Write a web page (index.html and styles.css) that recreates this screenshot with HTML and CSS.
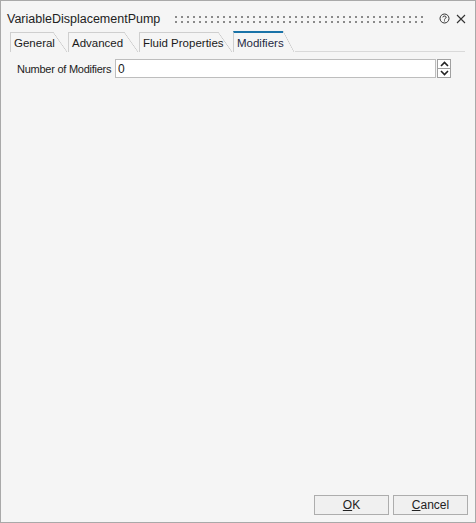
FILE: index.html
```html
<!DOCTYPE html>
<html lang="en">
<head>
  <meta charset="UTF-8">
  <title>VariableDisplacementPump</title>
  <link rel="stylesheet" href="styles.css">
</head>
<body>
  <div class="window">
    <div class="titlebar">
      <span class="title">VariableDisplacementPump</span>
      <span class="grip"></span>
      <svg class="help" width="11" height="11" viewBox="0 0 11 11">
        <circle cx="5.5" cy="5.5" r="4.5" fill="none" stroke="#333" stroke-width="1"/>
        <path d="M3.8 4.3 C3.8 2.6 7.2 2.6 7.2 4.3 C7.2 5.4 5.5 5.3 5.5 6.6" fill="none" stroke="#333" stroke-width="1"/>
        <rect x="5" y="7.4" width="1" height="1" fill="#333"/>
      </svg>
      <svg class="close" width="10" height="10" viewBox="0 0 10 10">
        <path d="M1 1 L9 9 M9 1 L1 9" stroke="#333" stroke-width="1.1"/>
      </svg>
    </div>

    <div class="tabs">
      <div class="tab"><span class="tab-label w-general">General</span><span class="tab-slant"></span></div>
      <div class="tab"><span class="tab-label w-advanced">Advanced</span><span class="tab-slant"></span></div>
      <div class="tab"><span class="tab-label w-fluid">Fluid Properties</span><span class="tab-slant"></span></div>
      <div class="tab active"><span class="tab-label w-modifiers">Modifiers</span><span class="tab-slant"></span></div>
      <div class="tab-rest"></div>
    </div>

    <div class="content">
      <div class="field">
        <label class="field-label">Number of Modifiers</label>
        <input class="field-input" type="text" value="0">
        <div class="spinner">
          <span class="spin-btn">
            <svg width="9" height="6" viewBox="0 0 9 6"><path d="M1 5 L4.5 1.5 L8 5" fill="none" stroke="#222" stroke-width="1.6"/></svg>
          </span>
          <span class="spin-btn">
            <svg width="9" height="6" viewBox="0 0 9 6"><path d="M1 1 L4.5 4.5 L8 1" fill="none" stroke="#222" stroke-width="1.6"/></svg>
          </span>
        </div>
      </div>
    </div>

    <div class="footer">
      <button class="button"><u>O</u>K</button>
      <button class="button"><u>C</u>ancel</button>
    </div>
  </div>
</body>
</html>
```

FILE: styles.css
```css
body {
  margin: 0;
  padding: 0;
  font-family: "Liberation Sans", Arial, sans-serif;
  font-size: 11px;
  color: #1a1a1a;
  background: #f5f5f5;
}

.window {
  width: 476px;
  height: 523px;
  box-sizing: border-box;
  border: 1px solid #a9a9a9;
  background: #f5f5f5;
  display: flex;
  flex-direction: column;
}

.titlebar {
  height: 30px;
  display: flex;
  align-items: center;
  padding: 0 9px 0 6px;
}

.title {
  font-size: 12.5px;
  color: #222;
  padding-top: 6px;
  white-space: nowrap;
}

.grip {
  flex: 1;
  height: 7px;
  margin: 6px 12px 0 15px;
  background-image:
    linear-gradient(90deg, transparent 2px, #f5f5f5 2px),
    linear-gradient(#8a8a8a 2px, transparent 2px);
  background-size: 6px 5px;
}

.help {
  margin-top: 5px;
  margin-right: 6px;
}

.close {
  margin-top: 5px;
}

/* tabs */
.tabs {
  display: flex;
  align-items: flex-end;
  padding-left: 9px;
  height: 21px;
}

.tab {
  display: flex;
  height: 20px;
  margin-right: 1px;
}

.tab-label {
  box-sizing: border-box;
  border-top: 1px solid #cfcfcf;
  border-left: 1px solid #cfcfcf;
  padding: 3px 0 0 3px;
  line-height: 15px;
  white-space: nowrap;
  font-size: 11.5px;
}

.w-general { width: 43px; }
.w-advanced { width: 56px; }
.w-fluid { width: 79px; }
.w-modifiers { width: 50px; }

.tab-slant {
  width: 14px;
  background: linear-gradient(to top right, transparent calc(50% - 0.6px), #c8c8c8 50%, transparent calc(50% + 0.6px));
}

.tab.active {
  height: 21px;
}

.tab.active .tab-label {
  border-top: 2px solid #1a73a8;
  border-left: 1px solid #cfcfcf;
  padding-top: 3px;
  color: #1f2a44;
}

.tab.active .tab-slant {
  width: 11px;
}

.tab-rest {
  width: 170px;
  border-bottom: 1px solid #d9d9d9;
  height: 0;
}

/* content */
.content {
  flex: 1;
  padding: 7px 24px 0 15px;
}

.field {
  display: flex;
  align-items: center;
  height: 19px;
}

.field-label {
  width: 98px;
  padding-left: 1px;
  color: #222;
  white-space: nowrap;
  font-size: 11px;
  letter-spacing: -0.25px;
}

.field-input {
  flex: 1;
  height: 19px;
  box-sizing: border-box;
  border: 1px solid #bdbdbd;
  background: white;
  font-family: inherit;
  font-size: 12px;
  padding: 0 2px;
  margin: 0;
  color: #1a1a1a;
  outline: none;
}

.spinner {
  display: flex;
  flex-direction: column;
  margin-left: 1px;
  width: 14px;
  height: 19px;
}

.spin-btn {
  flex: 1;
  border: 1px solid #a0a0a0;
  background: white;
  display: flex;
  align-items: center;
  justify-content: center;
}

.spin-btn + .spin-btn {
  border-top: none;
}

/* footer */
.footer {
  display: flex;
  justify-content: flex-end;
  gap: 4px;
  padding: 0 7px 7px 0;
}

.button {
  width: 75px;
  height: 20px;
  border: 1px solid #adadad;
  background: #f0f0f0;
  font-family: inherit;
  font-size: 12px;
  color: #222;
  padding: 0;
}
```
